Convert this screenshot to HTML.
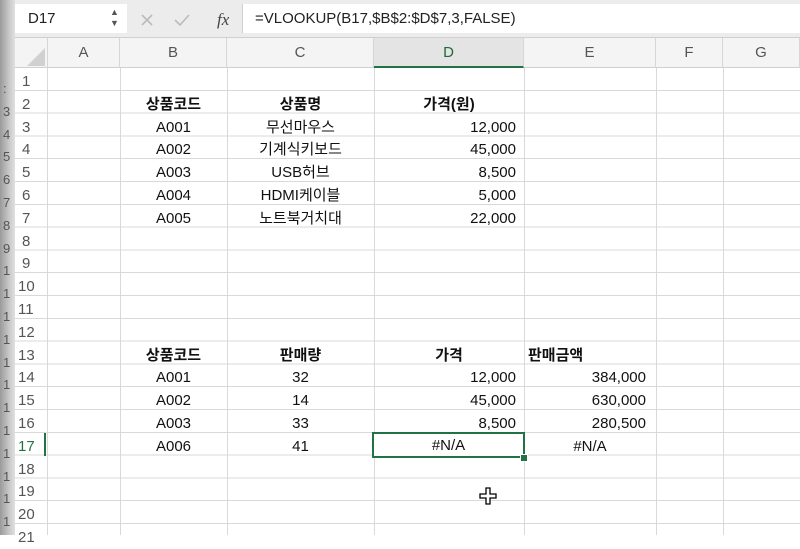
<!DOCTYPE html>
<html><head><meta charset="utf-8"><style>
body{margin:0;width:800px;height:535px;overflow:hidden;background:#fff;font-family:"Liberation Sans","Noto Sans CJK KR",sans-serif;position:relative}
.abs{position:absolute}
#strip{left:0;top:0;width:15px;height:535px;background:linear-gradient(90deg,#9a9a9a,#c8c8c8 60%,#e0e0e0);}
#fbar{left:15px;top:0;width:785px;height:38px;background:#ececec;border-bottom:1px solid #cfcfcf;box-sizing:border-box}
#name{left:15px;top:4px;width:112px;height:29px;background:#fff;font-size:15px;line-height:29px;padding-left:13px;box-sizing:border-box;color:#222}
#fin{left:242px;top:4px;width:558px;height:29px;background:#fff;font-size:15px;line-height:29px;padding-left:12px;box-sizing:border-box;color:#222;border-left:1px solid #cfcfcf}
#hdr{left:15px;top:38px;width:785px;height:30px;background:#f4f4f4;border-bottom:1px solid #cfcfcf;box-sizing:border-box}
.ch{position:absolute;top:38px;height:30px;line-height:30px;text-align:center;font-size:15px;color:#555;border-right:1px solid #d6d6d6;box-sizing:border-box}
#grid{left:15px;top:68px;width:785px;height:467px;
background:repeating-linear-gradient(180deg,transparent 0,transparent 21.8px,#d9d9d9 21.8px,#d9d9d9 22.8px);}
.vl{position:absolute;top:68px;width:1px;height:467px;background:#d9d9d9}
.c{position:absolute;height:22.8px;line-height:23px;padding-top:2px;font-size:15px;color:#111;white-space:nowrap;box-sizing:border-box}
.rn{position:absolute;left:22px;height:22.8px;line-height:23px;padding-top:2px;font-size:15px;color:#555}
.b{font-weight:bold}
</style></head><body>
<div class="abs" id="strip"></div>
<div class="abs" style="left:3px;top:78px;font-size:13px;color:#555;line-height:22.8px">:<br>3<br>4<br>5<br>6<br>7<br>8<br>9<br>1<br>1<br>1<br>1<br>1<br>1<br>1<br>1<br>1<br>1<br>1<br>1</div>
<div class="abs" id="fbar"></div>
<div class="abs" id="name">D17</div>
<div class="abs" style="left:110px;top:7px;font-size:9px;color:#555;line-height:11px">▲<br>▼</div>
<svg class="abs" style="left:138px;top:10px" width="120" height="20"><path d="M4 5l10 10M14 5L4 15" stroke="#bbb" stroke-width="1.6"/><path d="M37 10l5 5 9-10" stroke="#bbb" stroke-width="1.6" fill="none"/><text x="79" y="15" font-family="Liberation Serif" font-style="italic" font-size="17" fill="#444">fx</text></svg>
<div class="abs" id="fin">=VLOOKUP(B17,$B$2:$D$7,3,FALSE)</div>
<div class="abs" id="hdr"></div>
<svg class="abs" style="left:27px;top:48px" width="18" height="18"><path d="M18 0V18H0Z" fill="#d0d0d0"/></svg>
<div class="ch" style="left:47px;width:73px;border-left:1px solid #d6d6d6">A</div>
<div class="ch" style="left:120px;width:107px">B</div>
<div class="ch" style="left:227px;width:147px">C</div>
<div class="ch" style="left:374px;width:150px;background:#e4e4e4;color:#1e6b3a;border-bottom:2px solid #217346">D</div>
<div class="ch" style="left:524px;width:132px">E</div>
<div class="ch" style="left:656px;width:67px">F</div>
<div class="ch" style="left:723px;width:77px">G</div>
<div class="abs" id="grid"></div>
<div class="vl" style="left:47px"></div><div class="vl" style="left:120px"></div><div class="vl" style="left:227px"></div><div class="vl" style="left:374px"></div><div class="vl" style="left:524px"></div><div class="vl" style="left:656px"></div><div class="vl" style="left:723px"></div>
<div style="position:absolute;left:44px;top:433px;width:2px;height:23px;background:#217346"></div>

<div class="rn" style="top:68px">1</div><div class="rn" style="top:90.8px">2</div><div class="rn" style="top:113.6px">3</div><div class="rn" style="top:136.4px">4</div><div class="rn" style="top:159.2px">5</div><div class="rn" style="top:182px">6</div><div class="rn" style="top:204.8px">7</div><div class="rn" style="top:227.6px">8</div><div class="rn" style="top:250.4px">9</div><div class="rn" style="top:273.2px;left:18px">10</div><div class="rn" style="top:296px;left:18px">11</div><div class="rn" style="top:318.8px;left:18px">12</div><div class="rn" style="top:341.6px;left:18px">13</div><div class="rn" style="top:364.4px;left:18px">14</div><div class="rn" style="top:387.2px;left:18px">15</div><div class="rn" style="top:410px;left:18px">16</div><div class="rn" style="top:432.8px;left:18px;color:#217346">17</div><div class="rn" style="top:455.6px;left:18px">18</div><div class="rn" style="top:478.4px;left:18px">19</div><div class="rn" style="top:501.2px;left:18px">20</div><div class="rn" style="top:524px;left:18px">21</div>

<div class="c b" style="left:120px;width:107px;text-align:center;top:90.8px">상품코드</div>
<div class="c b" style="left:227px;width:147px;text-align:center;top:90.8px">상품명</div>
<div class="c b" style="left:374px;width:150px;text-align:center;top:90.8px">가격(원)</div>
<div class="c" style="left:120px;width:107px;text-align:center;top:113.6px">A001</div><div class="c" style="left:227px;width:147px;text-align:center;top:113.6px">무선마우스</div><div class="c" style="left:374px;width:150px;text-align:right;padding-right:8px;top:113.6px">12,000</div>
<div class="c" style="left:120px;width:107px;text-align:center;top:136.4px">A002</div><div class="c" style="left:227px;width:147px;text-align:center;top:136.4px">기계식키보드</div><div class="c" style="left:374px;width:150px;text-align:right;padding-right:8px;top:136.4px">45,000</div>
<div class="c" style="left:120px;width:107px;text-align:center;top:159.2px">A003</div><div class="c" style="left:227px;width:147px;text-align:center;top:159.2px">USB허브</div><div class="c" style="left:374px;width:150px;text-align:right;padding-right:8px;top:159.2px">8,500</div>
<div class="c" style="left:120px;width:107px;text-align:center;top:182px">A004</div><div class="c" style="left:227px;width:147px;text-align:center;top:182px">HDMI케이블</div><div class="c" style="left:374px;width:150px;text-align:right;padding-right:8px;top:182px">5,000</div>
<div class="c" style="left:120px;width:107px;text-align:center;top:204.8px">A005</div><div class="c" style="left:227px;width:147px;text-align:center;top:204.8px">노트북거치대</div><div class="c" style="left:374px;width:150px;text-align:right;padding-right:8px;top:204.8px">22,000</div>
<div class="c b" style="left:120px;width:107px;text-align:center;top:341.6px">상품코드</div>
<div class="c b" style="left:227px;width:147px;text-align:center;top:341.6px">판매량</div>
<div class="c b" style="left:374px;width:150px;text-align:center;top:341.6px">가격</div>
<div class="c b" style="left:528px;top:341.6px">판매금액</div>
<div class="c" style="left:120px;width:107px;text-align:center;top:364.4px">A001</div><div class="c" style="left:227px;width:147px;text-align:center;top:364.4px">32</div><div class="c" style="left:374px;width:150px;text-align:right;padding-right:8px;top:364.4px">12,000</div><div class="c" style="left:524px;width:132px;text-align:right;padding-right:10px;top:364.4px">384,000</div>
<div class="c" style="left:120px;width:107px;text-align:center;top:387.2px">A002</div><div class="c" style="left:227px;width:147px;text-align:center;top:387.2px">14</div><div class="c" style="left:374px;width:150px;text-align:right;padding-right:8px;top:387.2px">45,000</div><div class="c" style="left:524px;width:132px;text-align:right;padding-right:10px;top:387.2px">630,000</div>
<div class="c" style="left:120px;width:107px;text-align:center;top:410px">A003</div><div class="c" style="left:227px;width:147px;text-align:center;top:410px">33</div><div class="c" style="left:374px;width:150px;text-align:right;padding-right:8px;top:410px">8,500</div><div class="c" style="left:524px;width:132px;text-align:right;padding-right:10px;top:410px">280,500</div>
<div class="c" style="left:120px;width:107px;text-align:center;top:432.8px">A006</div><div class="c" style="left:227px;width:147px;text-align:center;top:432.8px">41</div><div class="c" style="left:524px;width:132px;text-align:center;top:432.8px">#N/A</div>
<div style="position:absolute;left:372px;top:431.5px;width:153px;height:26px;border:2px solid #217346;box-sizing:border-box;font-size:15px;line-height:24px;text-align:center;color:#111;background:#fff">#N/A</div>
<div style="position:absolute;left:520px;top:454px;width:6px;height:6px;background:#217346;border:1px solid #fff"></div>
<svg class="abs" style="left:479px;top:487px" width="20" height="20"><path d="M7 1h4v6h6v4h-6v6H7v-6H1V7h6z" fill="#fff" stroke="#000" stroke-width="1.3"/></svg>
</body></html>
